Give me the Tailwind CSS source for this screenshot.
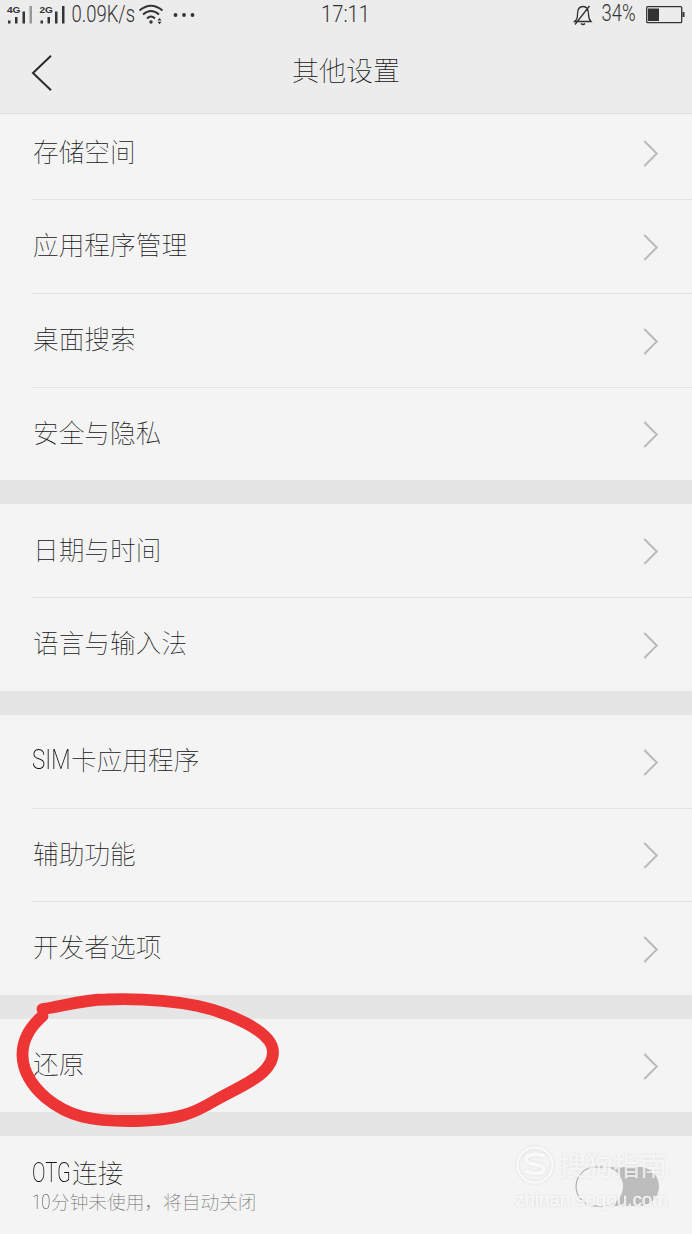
<!DOCTYPE html>
<html lang="zh-CN">
<head>
    <meta charset="UTF-8">
    <meta name="viewport" content="width=device-width, initial-scale=1.0">
    <title>其他设置</title>
    <script src="https://cdn.jsdelivr.net/npm/@tailwindcss/browser@4"></script>
</head>
<body class="bg-[#f4f4f4] font-['Noto_Sans_CJK_SC',sans-serif] font-thin text-[#141414]">
    <svg class="hidden">
        <symbol id="chevron" viewBox="0 0 16 28">
            <path d="M1.300 2L13.800 14.500L1.300 27" fill="none" stroke="#b9b9b9" stroke-width="1.900"/>
        </symbol>
    </svg>

    <div class="relative h-[1234px] w-[692px] overflow-hidden">
        <!-- Barra de estado + título -->
        <header class="relative z-10 h-[114px] border-b border-[#dedede] bg-[#ececec]">
            <div class="flex h-7 items-center justify-between px-[6px]">
                <div class="flex items-center">
                    <svg class="h-7 w-[60px]" viewBox="6 0 60 28" font-family="Liberation Sans" font-weight="700" font-size="9.500" fill="#333">
                        <text x="7" y="13.300" textLength="13.500" lengthAdjust="spacingAndGlyphs">4G</text>
                        <path d="M8 20.500h2.500v3H8zM15 17h2.500v6.500h-2.500zM22.500 11.500h2.500v12h-2.500z"/>
                        <path d="M29.500 6h2.500v17.500h-2.500z" fill="#999"/>
                        <text x="39.500" y="13.300" textLength="13.500" lengthAdjust="spacingAndGlyphs">2G</text>
                        <path d="M40.500 20.500h2.500v3h-2.500zM47.500 17h2.500v6.500h-2.500zM55 11.500h2.500v12h-2.500zM62 6h2.500v17.500h-2.500z"/>
                    </svg>
                    <svg class="h-7 w-[72px] overflow-visible" viewBox="66 0 72 28" font-family="Roboto" font-weight="300" font-size="23" fill="#333">
                        <text x="71.500" y="21.500" textLength="63.500" lengthAdjust="spacingAndGlyphs">0.09K/s</text>
                    </svg>
                    <svg class="h-7 w-[60px]" viewBox="138 0 60 28" fill="none" stroke="#333" stroke-width="1.900">
                        <path d="M139.500 10.500Q151 1 162.500 10.500M143 14.500Q151 7.500 159 14.500M147 18.500Q151 14.500 155 18.500"/>
                        <g fill="#333" stroke="none">
                            <circle cx="151" cy="22" r="1.700"/>
                            <path d="M157.500 20.500l2-2.500 2 2.500zM157.500 21.800h4l-2 2.500z"/>
                            <circle cx="175.500" cy="15" r="1.900"/>
                            <circle cx="184" cy="15" r="1.900"/>
                            <circle cx="192.500" cy="15" r="1.900"/>
                        </g>
                    </svg>
                </div>
                <svg class="h-7 w-[120px]" viewBox="566 0 120 28" fill="none" stroke="#333" stroke-width="1.300">
                    <path d="M574.500 21.500h16.500c-2-2-2.500-3-2.500-7.500 0-5-2-7.500-5.500-7.500s-5.500 2.500-5.500 7.500c0 4.500-.8 5.500-3 7.500zM575 24.500L589.500 6M581 23.500q2 2 4 0"/>
                    <text x="601.500" y="21" textLength="34" lengthAdjust="spacingAndGlyphs" font-family="Roboto" font-weight="300" font-size="23" fill="#333" stroke="none">34%</text>
                    <rect x="646.700" y="6.700" width="35" height="16" rx="1"/>
                    <path d="M648 8.500h11v12.500h-11zM682.500 12h2v5h-2z" fill="#333" stroke="none"/>
                </svg>
            </div>
            <svg class="absolute top-0 left-[316px] h-7 w-[60px]" viewBox="316 0 60 28" font-family="Roboto" font-weight="300" font-size="23" fill="#333">
                <text x="321" y="21.800" textLength="49" lengthAdjust="spacingAndGlyphs">17:11</text>
            </svg>
            <div class="relative flex h-[86px] items-center justify-center">
                <svg class="absolute top-[27px] left-[31px] h-9 w-[22px]" viewBox="0 0 22 36" fill="none" stroke="#2b2b2b" stroke-width="2">
                    <path d="M20 .8L2 18l18 17.200"/>
                </svg>
                <h1 class="pb-1 text-[27px] leading-none">其他设置</h1>
            </div>
        </header>

        <main>
            <section class="-mt-2 h-[374px] pl-[33px] text-[25.7px] leading-none">
                <div class="-ml-px flex h-[94px] items-center justify-between border-b border-[#e2e2e2] pr-[33px] pl-px">
                    <span class="pb-[4px]">存储空间</span><svg class="h-7 w-4"><use href="#chevron"/></svg>
                </div>
                <div class="-ml-px flex h-[94px] items-center justify-between border-b border-[#e2e2e2] pr-[33px] pl-px">
                    <span class="pb-[5px]">应用程序管理</span><svg class="h-7 w-4"><use href="#chevron"/></svg>
                </div>
                <div class="-ml-px flex h-[94px] items-center justify-between border-b border-[#e2e2e2] pr-[33px] pl-px">
                    <span class="pb-[6px]">桌面搜索</span><svg class="h-7 w-4"><use href="#chevron"/></svg>
                </div>
                <div class="flex h-[92px] items-center justify-between pr-[33px]">
                    <span class="pb-[5px]">安全与隐私</span><svg class="h-7 w-4"><use href="#chevron"/></svg>
                </div>
            </section>
            <div class="h-6 bg-[#e5e5e5]"></div>

            <section class="h-[187px] pl-[33px] text-[25.7px] leading-none">
                <div class="-ml-px flex h-[94px] items-center justify-between border-b border-[#e2e2e2] pr-[33px] pl-px">
                    <span class="pb-[4px]">日期与时间</span><svg class="h-7 w-4"><use href="#chevron"/></svg>
                </div>
                <div class="flex h-[93px] items-center justify-between pr-[33px]">
                    <span class="pb-[6px]">语言与输入法</span><svg class="h-7 w-4"><use href="#chevron"/></svg>
                </div>
            </section>
            <div class="h-6 bg-[#e5e5e5]"></div>

            <section class="h-[280px] pl-[33px] text-[25.7px] leading-none">
                <div class="-ml-px flex h-[94px] items-center justify-between border-b border-[#e2e2e2] pr-[33px]">
                    <span class="flex pb-[5px]"><span class="w-[39px] origin-left scale-x-[0.8] pt-px font-['Roboto',sans-serif] text-[28px] leading-[26px] font-extralight">SIM</span>卡应用程序</span><svg class="h-7 w-4"><use href="#chevron"/></svg>
                </div>
                <div class="-ml-px flex h-[93px] items-center justify-between border-b border-[#e2e2e2] pr-[33px] pl-px">
                    <span class="pb-[5px]">辅助功能</span><svg class="h-7 w-4"><use href="#chevron"/></svg>
                </div>
                <div class="flex h-[94px] items-center justify-between pr-[33px]">
                    <span class="pb-[6px]">开发者选项</span><svg class="h-7 w-4"><use href="#chevron"/></svg>
                </div>
            </section>
            <div class="h-6 bg-[#e5e5e5]"></div>

            <section class="h-[93px] pl-[33px] text-[25.7px] leading-none">
                <div class="flex h-[93px] items-center justify-between pr-[33px]">
                    <span class="pb-[5px]">还原</span><svg class="h-7 w-4"><use href="#chevron"/></svg>
                </div>
            </section>
            <div class="h-6 bg-[#e5e5e5]"></div>

            <section class="flex h-[98px] justify-between pt-[22px] pr-8 pl-8">
                <div>
                    <div class="flex text-[25.7px] leading-7"><span class="w-[40px] origin-left scale-x-[0.72] pt-px font-['Roboto',sans-serif] text-[28px] font-extralight">OTG</span>连接</div>
                    <div class="mt-[2px] flex text-[18.7px] leading-6 text-[#6a6a6a]"><span class="w-[19px] origin-left scale-x-[0.84] pt-px font-['Roboto',sans-serif] text-[20px] font-extralight">10</span>分钟未使用，将自动关闭</div>
                </div>
                <svg class="mt-2 h-[41px] w-[85px]" viewBox="0 0 85 41">
                    <rect x="1" y="1" width="83" height="39" rx="19.500" fill="#bdbdbd"/>
                    <rect x="1" y="1" width="47" height="39" rx="19.500" fill="#f4f4f4"/>
                    <path d="M28 1h-7.500a19.500 19.500 0 0 0 0 39H28" fill="none" stroke="#a5a5a5"/>
                </svg>
            </section>
        </main>

        <!-- Marca de agua -->
        <svg class="absolute top-[1140px] left-[508px] h-[76px] w-[176px] drop-shadow-[0_0_1px_rgba(0,0,0,0.12)]" viewBox="508 1140 176 76" fill="#f9f9f9" fill-opacity=".75">
            <circle cx="535" cy="1165" r="17.500" fill="none" stroke="#f9f9f9" stroke-width="2.500"/>
            <path d="M545 1156.500c-6-3-19-3.500-19 3 0 6 18 4 18 9.500 0 5.500-12 5-19 2" fill="none" stroke="#f9f9f9" stroke-width="4"/>
            <text x="559" y="1176" font-family="Noto Sans CJK SC" font-weight="500" font-size="27" textLength="108">搜狗指南</text>
            <text x="515" y="1206" font-family="Liberation Sans" font-weight="400" font-size="19" textLength="153" lengthAdjust="spacingAndGlyphs" stroke="#f9f9f9" stroke-width=".5">zhinan.sogou.com</text>
        </svg>

        <!-- Trazo rojo -->
        <svg class="absolute top-[980px] left-0 h-[160px] w-[300px]" viewBox="0 980 300 160" fill="none" stroke="#ee3535" stroke-width="11.800" stroke-linecap="round" stroke-linejoin="round">
            <path d="M42.500 1009C60 1007 82 999.500 106 999.500C136 998.500 168 1000 198 1006C225 1012 273 1030 273 1052C273 1075 240 1086 216 1100C196 1112 180 1121 129 1121C92 1121 69 1117 46 1098C31 1085 23 1070 22.500 1056C22 1040 31 1026 42.500 1016"/>
        </svg>
    </div>
</body>
</html>
